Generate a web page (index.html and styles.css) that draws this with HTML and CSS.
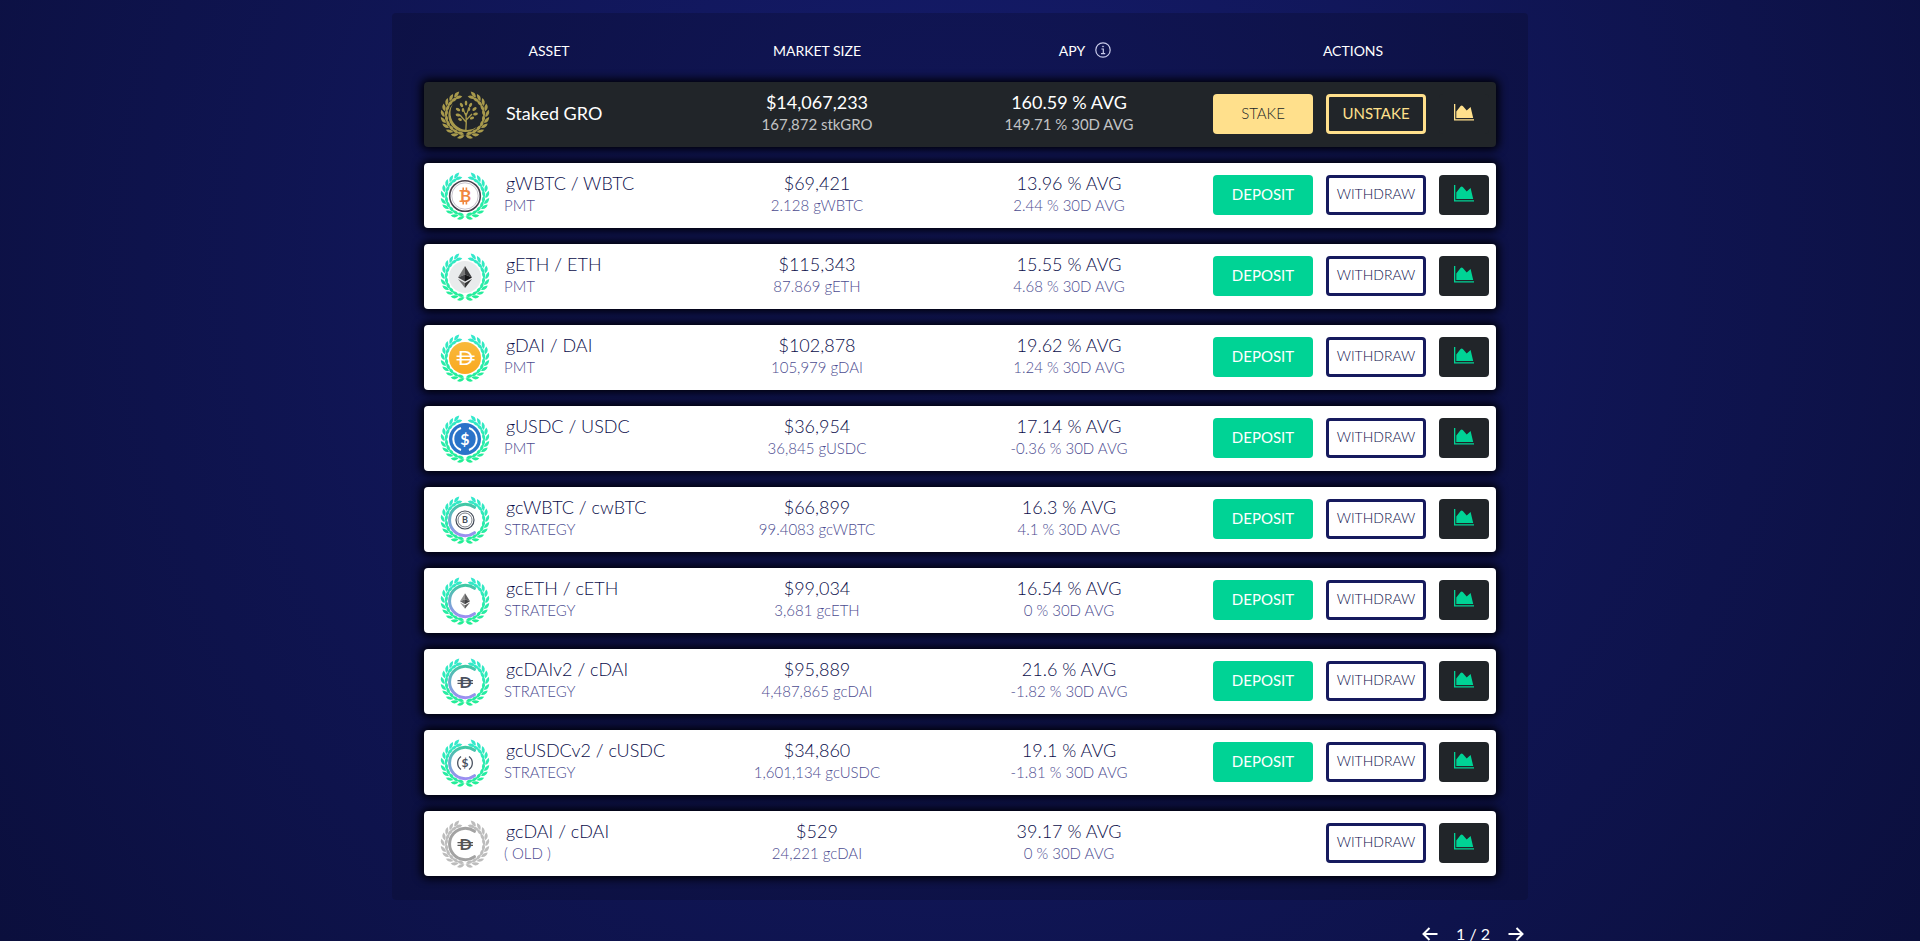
FILE: index.html
```html
<!DOCTYPE html>
<html lang="en">
<head>
<meta charset="utf-8">
<title>Assets</title>
<link rel="stylesheet" href="styles.css">
</head>
<body>
<svg class="defs" aria-hidden="true">
  <defs>
    <linearGradient id="mint" x1="0" y1="0" x2="0" y2="1"><stop offset="0" stop-color="#35e8cf"/><stop offset="1" stop-color="#22ee92"/></linearGradient>
    <linearGradient id="arcgrad" gradientUnits="userSpaceOnUse" x1="0" y1="8" x2="0" y2="41"><stop offset="0" stop-color="#3fc9a4"/><stop offset="1" stop-color="#a08cf5"/></linearGradient>
    <linearGradient id="gold" x1="0" y1="0" x2="0" y2="1"><stop offset="0" stop-color="#f9b93c"/><stop offset="1" stop-color="#f9a91f"/></linearGradient>
    <g id="pair" fill="#fff">
      <path d="M26 44.6Q22 43.2 18.6 47.4Q23.6 49.4 26 44.6Z"/>
      <path d="M25.4 43.6Q23.4 39.8 18.4 41.4Q20.4 45.4 25.4 43.6Z"/>
    </g>
    <g id="branch">
      <use href="#pair" transform="rotate(4 25 24)"/><use href="#pair" transform="rotate(21 25 24)"/>
      <use href="#pair" transform="rotate(37 25 24)"/><use href="#pair" transform="rotate(54 25 24)"/>
      <use href="#pair" transform="rotate(70 25 24)"/><use href="#pair" transform="rotate(87 25 24)"/>
      <use href="#pair" transform="rotate(103 25 24)"/><use href="#pair" transform="rotate(119 25 24)"/>
      <use href="#pair" transform="rotate(135 25 24)"/><use href="#pair" transform="rotate(151 25 24)"/>
    </g>
    <mask id="wreath" maskUnits="userSpaceOnUse" x="0" y="0" width="50" height="48">
      <use href="#branch"/><use href="#branch" transform="translate(50 0) scale(-1 1)"/>
    </mask>
    <symbol id="eth" viewBox="0 0 14 22">
      <path d="M7 0L0 11.500 7 8.400Z" fill="#777"/><path d="M7 0L14 11.500 7 8.400Z" fill="#3a3a3c"/>
      <path d="M0 11.500L7 8.400V15.500Z" fill="#3f3f42"/><path d="M14 11.500L7 8.400V15.500Z" fill="#151517"/>
      <path d="M0 13L7 22V17Z" fill="#777"/><path d="M14 13L7 22V17Z" fill="#333"/>
    </symbol>
    <symbol id="chart" viewBox="0 0 20 17">
      <path d="M0 0H1.300V15.200H20V16.600H0ZM2.300 14V7.600L6.600 2Q7.700 1 8.800 2L12.700 6.600 16.600 3 19.200 14Z" fill="currentColor"/>
    </symbol>
  </defs>
</svg>
<main class="page">
  <section class="panel">
    <table class="assets">
      <thead>
        <tr class="head">
          <th scope="col">ASSET</th>
          <th scope="col">MARKET SIZE</th>
          <th scope="col">APY
            <svg class="info" viewBox="0 0 16 16" fill="none" stroke="currentColor"><circle cx="8" cy="8" r="7.200" stroke-width="1.200"/><path d="M6.400 7H8.300V11.500M6 11.700H10.200" stroke-width="1.200"/><circle cx="8" cy="4.500" r=".6" fill="currentColor" stroke-width=".6"/></svg>
          </th>
          <th scope="col">ACTIONS</th>
        </tr>
      </thead>
      <tbody>
        <tr class="row staked">
          <td class="asset"><svg class="coin" viewBox="0 0 50 48"><rect width="50" height="48" fill="#a89a4c" mask="url(#wreath)"/>
            <g fill="none" stroke="#a89a4c"><path d="M13 13A16 16 0 1 0 37 36A17 17 0 0 1 13 13Z" fill="#a89a4c" stroke="none"/><path d="M25.800 40Q26.600 32 26 22M26 31L20 24M26.200 29L32 23M26 25L23 18M26 25L29 17" stroke-width="1.300"/></g>
            <g fill="#a89a4c"><ellipse cx="26" cy="12" rx="1.300" ry="2.500"/><ellipse cx="21.500" cy="14" rx="1.400" ry="2.400" transform="rotate(-30 21.500 14)"/><ellipse cx="30.500" cy="14" rx="1.400" ry="2.400" transform="rotate(30 30.500 14)"/><ellipse cx="18" cy="18.500" rx="1.400" ry="2.400" transform="rotate(-60 18 18.500)"/><ellipse cx="34.500" cy="18" rx="1.400" ry="2.400" transform="rotate(55 34.500 18)"/><ellipse cx="18" cy="24" rx="1.400" ry="2.400" transform="rotate(-80 18 24)"/><ellipse cx="35.500" cy="23" rx="1.400" ry="2.400" transform="rotate(80 35.500 23)"/><ellipse cx="23" cy="19" rx="1.300" ry="2"/><ellipse cx="29" cy="18" rx="1.300" ry="2"/><ellipse cx="32" cy="27" rx="1.400" ry="2.200" transform="rotate(70 32 27)"/><ellipse cx="20" cy="28.500" rx="1.300" ry="2" transform="rotate(-70 20 28.500)"/></g></svg>
            <div class="names"><div class="name">Staked GRO</div></div></td>
          <td class="figure"><div class="main">$14,067,233</div><div class="sub">167,872 stkGRO</div></td>
          <td class="figure"><div class="main">160.59 % AVG</div><div class="sub">149.71 % 30D AVG</div></td>
          <td class="actions"><button class="btn fill">STAKE</button><button class="btn line">UNSTAKE</button><button class="btn stats" aria-label="Statistics"><svg><use href="#chart"/></svg></button></td>
        </tr>
        <tr class="row">
          <td class="asset"><svg class="coin" viewBox="0 0 50 48"><rect width="50" height="48" fill="url(#mint)" mask="url(#wreath)"/><circle cx="25" cy="24" r="15.300" fill="#fff" stroke="#4a4450" stroke-width="1.600"/><circle cx="25" cy="24" r="13.200" fill="none" stroke="#b9b4c0" stroke-width=".8"/><path d="M23.200 15.500V18.500M26.400 15.500V18.500M23.200 29.500V32.500M26.400 29.500V32.500M19.500 18.800H23M19.500 29.200H23" stroke="#f0883e" stroke-width="1.600"/><text x="25.500" y="30" class="glyph" font-size="17" fill="#f0883e">B</text></svg>
            <div class="names"><div class="name">gWBTC / WBTC</div><div class="kind">PMT</div></div></td>
          <td class="figure"><div class="main">$69,421</div><div class="sub">2.128 gWBTC</div></td>
          <td class="figure"><div class="main">13.96 % AVG</div><div class="sub">2.44 % 30D AVG</div></td>
          <td class="actions"><button class="btn fill">DEPOSIT</button><button class="btn line">WITHDRAW</button><button class="btn stats" aria-label="Statistics"><svg><use href="#chart"/></svg></button></td>
        </tr>
        <tr class="row">
          <td class="asset"><svg class="coin" viewBox="0 0 50 48"><rect width="50" height="48" fill="url(#mint)" mask="url(#wreath)"/><circle cx="25" cy="24" r="16" fill="#e9ebec"/><use href="#eth" x="18" y="13" width="14" height="22"/></svg>
            <div class="names"><div class="name">gETH / ETH</div><div class="kind">PMT</div></div></td>
          <td class="figure"><div class="main">$115,343</div><div class="sub">87.869 gETH</div></td>
          <td class="figure"><div class="main">15.55 % AVG</div><div class="sub">4.68 % 30D AVG</div></td>
          <td class="actions"><button class="btn fill">DEPOSIT</button><button class="btn line">WITHDRAW</button><button class="btn stats" aria-label="Statistics"><svg><use href="#chart"/></svg></button></td>
        </tr>
        <tr class="row">
          <td class="asset"><svg class="coin" viewBox="0 0 50 48"><rect width="50" height="48" fill="url(#mint)" mask="url(#wreath)"/><circle cx="25" cy="24" r="16" fill="url(#gold)"/><path d="M16.500 22.300H34.500M16.500 25.700H34.500" stroke="#fff" stroke-width="1.400"/><text x="25.500" y="31" class="glyph thin" font-size="20" fill="#fff">D</text></svg>
            <div class="names"><div class="name">gDAI / DAI</div><div class="kind">PMT</div></div></td>
          <td class="figure"><div class="main">$102,878</div><div class="sub">105,979 gDAI</div></td>
          <td class="figure"><div class="main">19.62 % AVG</div><div class="sub">1.24 % 30D AVG</div></td>
          <td class="actions"><button class="btn fill">DEPOSIT</button><button class="btn line">WITHDRAW</button><button class="btn stats" aria-label="Statistics"><svg><use href="#chart"/></svg></button></td>
        </tr>
        <tr class="row">
          <td class="asset"><svg class="coin" viewBox="0 0 50 48"><rect width="50" height="48" fill="url(#mint)" mask="url(#wreath)"/><circle cx="25" cy="24" r="16" fill="#2a73c9"/><path d="M21 13A11.700 11.700 0 0 0 21 35M29 13A11.700 11.700 0 0 1 29 35" fill="none" stroke="#fff" stroke-width="2"/><text x="25" y="29.800" class="glyph" font-size="16" fill="#fff">$</text></svg>
            <div class="names"><div class="name">gUSDC / USDC</div><div class="kind">PMT</div></div></td>
          <td class="figure"><div class="main">$36,954</div><div class="sub">36,845 gUSDC</div></td>
          <td class="figure"><div class="main">17.14 % AVG</div><div class="sub">-0.36 % 30D AVG</div></td>
          <td class="actions"><button class="btn fill">DEPOSIT</button><button class="btn line">WITHDRAW</button><button class="btn stats" aria-label="Statistics"><svg><use href="#chart"/></svg></button></td>
        </tr>
        <tr class="row">
          <td class="asset"><svg class="coin" viewBox="0 0 50 48"><rect width="50" height="48" fill="url(#mint)" mask="url(#wreath)"/><path class="arc" d="M34.500 11.300A15.700 15.700 0 1 0 34.500 36.700" stroke="url(#arcgrad)"/><circle cx="25" cy="24" r="9" fill="none" stroke="#444b58" stroke-width="1.200"/><circle cx="25" cy="24" r="7" fill="none" stroke="#444b58" stroke-width=".7"/><text x="25" y="27.400" class="glyph" font-size="9" fill="#444b58">B</text></svg>
            <div class="names"><div class="name">gcWBTC / cwBTC</div><div class="kind">STRATEGY</div></div></td>
          <td class="figure"><div class="main">$66,899</div><div class="sub">99.4083 gcWBTC</div></td>
          <td class="figure"><div class="main">16.3 % AVG</div><div class="sub">4.1 % 30D AVG</div></td>
          <td class="actions"><button class="btn fill">DEPOSIT</button><button class="btn line">WITHDRAW</button><button class="btn stats" aria-label="Statistics"><svg><use href="#chart"/></svg></button></td>
        </tr>
        <tr class="row">
          <td class="asset"><svg class="coin" viewBox="0 0 50 48"><rect width="50" height="48" fill="url(#mint)" mask="url(#wreath)"/><path class="arc" d="M34.500 11.300A15.700 15.700 0 1 0 34.500 36.700" stroke="url(#arcgrad)"/><use href="#eth" x="20" y="16" width="10" height="16" opacity=".8"/></svg>
            <div class="names"><div class="name">gcETH / cETH</div><div class="kind">STRATEGY</div></div></td>
          <td class="figure"><div class="main">$99,034</div><div class="sub">3,681 gcETH</div></td>
          <td class="figure"><div class="main">16.54 % AVG</div><div class="sub">0 % 30D AVG</div></td>
          <td class="actions"><button class="btn fill">DEPOSIT</button><button class="btn line">WITHDRAW</button><button class="btn stats" aria-label="Statistics"><svg><use href="#chart"/></svg></button></td>
        </tr>
        <tr class="row">
          <td class="asset"><svg class="coin" viewBox="0 0 50 48"><rect width="50" height="48" fill="url(#mint)" mask="url(#wreath)"/><path class="arc" d="M34.500 11.300A15.700 15.700 0 1 0 34.500 36.700" stroke="url(#arcgrad)"/><path d="M17.500 22.600H33M17.500 25.400H33" stroke="#4a5260" stroke-width="1.200"/><text x="25.500" y="29.700" class="glyph" font-size="16" fill="#4a5260">D</text></svg>
            <div class="names"><div class="name">gcDAIv2 / cDAI</div><div class="kind">STRATEGY</div></div></td>
          <td class="figure"><div class="main">$95,889</div><div class="sub">4,487,865 gcDAI</div></td>
          <td class="figure"><div class="main">21.6 % AVG</div><div class="sub">-1.82 % 30D AVG</div></td>
          <td class="actions"><button class="btn fill">DEPOSIT</button><button class="btn line">WITHDRAW</button><button class="btn stats" aria-label="Statistics"><svg><use href="#chart"/></svg></button></td>
        </tr>
        <tr class="row">
          <td class="asset"><svg class="coin" viewBox="0 0 50 48"><rect width="50" height="48" fill="url(#mint)" mask="url(#wreath)"/><path class="arc" d="M34.500 11.300A15.700 15.700 0 1 0 34.500 36.700" stroke="url(#arcgrad)"/><path d="M21 17.500A8 8 0 0 0 21 30.500M29 17.500A8 8 0 0 1 29 30.500" fill="none" stroke="#4a5260" stroke-width="1.300"/><text x="25" y="28.200" class="glyph" font-size="12" fill="#4a5260">$</text></svg>
            <div class="names"><div class="name">gcUSDCv2 / cUSDC</div><div class="kind">STRATEGY</div></div></td>
          <td class="figure"><div class="main">$34,860</div><div class="sub">1,601,134 gcUSDC</div></td>
          <td class="figure"><div class="main">19.1 % AVG</div><div class="sub">-1.81 % 30D AVG</div></td>
          <td class="actions"><button class="btn fill">DEPOSIT</button><button class="btn line">WITHDRAW</button><button class="btn stats" aria-label="Statistics"><svg><use href="#chart"/></svg></button></td>
        </tr>
        <tr class="row">
          <td class="asset"><svg class="coin" viewBox="0 0 50 48"><rect width="50" height="48" fill="#bcbcbc" mask="url(#wreath)"/><path class="arc" d="M34.500 11.300A15.700 15.700 0 1 0 34.500 36.700" stroke="#a3a3a3"/><path d="M17.500 22.600H33M17.500 25.400H33" stroke="#555" stroke-width="1.200"/><text x="25.500" y="29.700" class="glyph" font-size="16" fill="#555">D</text></svg>
            <div class="names"><div class="name">gcDAI / cDAI</div><div class="kind">( OLD )</div></div></td>
          <td class="figure"><div class="main">$529</div><div class="sub">24,221 gcDAI</div></td>
          <td class="figure"><div class="main">39.17 % AVG</div><div class="sub">0 % 30D AVG</div></td>
          <td class="actions"><button class="btn line">WITHDRAW</button><button class="btn stats" aria-label="Statistics"><svg><use href="#chart"/></svg></button></td>
        </tr>
      </tbody>
    </table>
  </section>
  <nav class="pager" aria-label="Pages">
    <button class="arrow" aria-label="Previous page"><svg viewBox="0 0 16 14"><path d="M15.500 7H1.500M7.500 1L1.500 7 7.500 13"/></svg></button>
    <span>1 / 2</span>
    <button class="arrow" aria-label="Next page"><svg viewBox="0 0 16 14"><path d="M.5 7H14.500M8.500 1L14.500 7 8.500 13"/></svg></button>
  </nav>
</main>
</body>
</html>
```
FILE: styles.css
```css
* { box-sizing: border-box; }
html, body { height: 100%; }
body {
  margin: 0;
  overflow: hidden;
  background: radial-gradient(circle at 50% 28%, #151c6e 0%, #0b0f3d 100%);
  color: #fff;
  font-family: Lato, "Open Sans", sans-serif;
  font-size: 18px;
}
.defs { position: absolute; width: 0; height: 0; }
.page { max-width: 1136px; margin: 0 auto; padding-top: 13px; }
.panel {
  padding: 24px 32px;
  border-radius: 4px;
  background: radial-gradient(ellipse at 50% 28%, #111658 0%, #0c1040 100%);
}
.assets, .assets thead { display: block; }
.assets tbody { display: flex; flex-direction: column; gap: 16px; }
.head {
  display: grid;
  grid-template-columns: repeat(4, 1fr);
  margin: 0 9px 19px -9px;
}
.head th {
  display: flex;
  align-items: center;
  justify-content: center;
  gap: 10px;
  padding: 0;
  height: 26px;
  font-size: 14px;
  font-weight: 400;
}
.info { width: 16px; height: 16px; color: #c9cbea; }
.row {
  display: grid;
  grid-template-columns: 259fr 268fr 236fr 309fr;
  align-items: center;
  height: 65px;
  border-radius: 4px;
  background: #fff;
  color: #0a0d4a;
  box-shadow: 0 0 8px 3px #000008;
}
.row td { padding: 0; }
.row .asset { display: flex; align-items: center; gap: 14px; padding-left: 16px; }
.coin { width: 50px; height: 48px; flex: none; }
.arc { fill: none; stroke-width: 3px; stroke-linecap: round; }
.glyph { font-family: Lato, sans-serif; font-weight: 700; text-anchor: middle; }
.glyph.thin { font-weight: 400; }
.names, .figure { line-height: 22px; font-weight: 300; }
.names, .row .figure { padding-bottom: 3px; }
.figure { text-align: center; }
.name { padding-left: 2px; white-space: nowrap; }
.kind, .sub { color: #4c4c90; font-size: 15px; }
.row .actions {
  display: flex;
  justify-content: flex-end;
  gap: 13px;
  padding: 0 7px 1px 0;
}
.btn {
  width: 100px;
  height: 40px;
  padding: 0 0 3px;
  border: 0;
  border-radius: 4px;
  font: 300 15px Lato, "Open Sans", sans-serif;
}
.btn.fill { background: #00d395; color: #fff; font-weight: 400; }
.btn.line { border: 3px solid #161a5e; background: none; color: #0a0d4a; font-size: 14px; }
.btn.stats { width: 50px; background: #212529; color: #00d395; }
.btn.stats svg { display: block; width: 20px; height: 17px; margin: 0 auto; }
.staked { background: #212529; color: #fff; }
.staked .name, .staked .figure { font-weight: 400; }
.staked .sub { color: #c2c3c5; }
.staked .btn.fill { background: #ffe08c; color: #212529; font-weight: 300; }
.staked .btn.line { border-color: #ffe08c; color: #ffe08c; font-size: 15px; font-weight: 400; }
.staked .stats { color: #ffe08c; }
.pager {
  display: flex;
  align-items: center;
  justify-content: flex-end;
  gap: 18px;
  padding: 21px 4px 0;
  font-size: 16px;
  line-height: 26px;
}
.arrow { display: flex; padding: 0; border: 0; background: none; }
.arrow svg { width: 16px; height: 14px; fill: none; stroke: #fff; stroke-width: 2; }
```
